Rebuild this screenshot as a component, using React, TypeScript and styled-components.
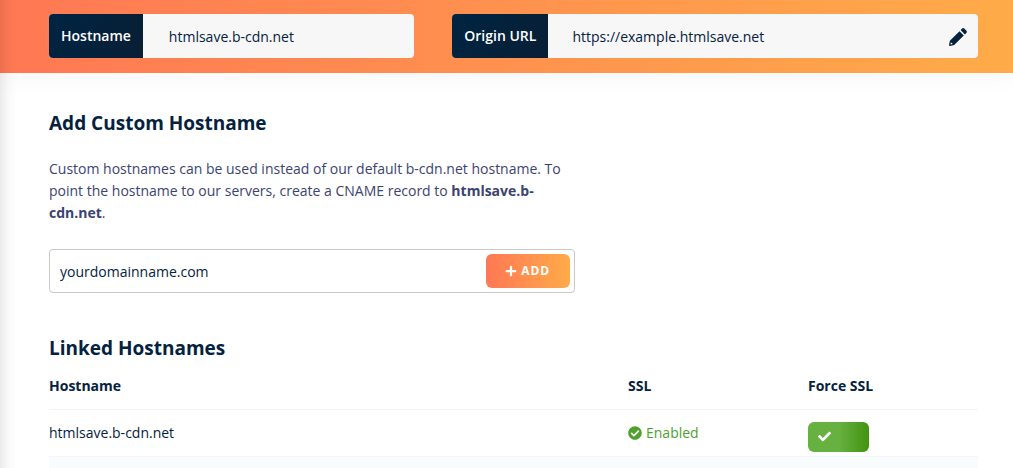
import React from 'react';
import styled, { createGlobalStyle } from 'styled-components';
import { FaCheck, FaCheckCircle, FaPlus } from 'react-icons/fa';

const navy = '#04223f';
const brand = 'linear-gradient(90deg, #ff7854 0%, #ffab49 100%)';
const fontStack = '"Open Sans", "Liberation Sans", sans-serif';

const GlobalStyle = createGlobalStyle`
  *, *::before, *::after { box-sizing: border-box; }
  body {
    margin: 0;
    background: #fff;
    color: ${navy};
    font: 400 14px/22px ${fontStack};
  }
`;

const Page = styled.div`
  position: relative;
  min-height: 100vh;
  overflow: hidden;

  &::after {
    content: '';
    position: absolute;
    inset: 0 auto 0 0;
    width: 18px;
    background: linear-gradient(90deg, rgba(0, 0, 0, 0.08), rgba(0, 0, 0, 0.02) 50%, transparent);
    pointer-events: none;
  }
`;

const Banner = styled.header`
  display: grid;
  grid-template-columns: 41fr 59fr;
  gap: 38px;
  padding: 14px 35px 15px 49px;
  background: ${brand};
  box-shadow: 0 0 30px rgba(0, 0, 0, 0.05);
`;

const Field = styled.div`
  display: flex;
  height: 44px;
  border-radius: 4px;
  overflow: hidden;
  background: #f7f7f7;
`;

const FieldLabel = styled.label`
  flex: none;
  padding: 0 12px;
  background: linear-gradient(120deg, #002442, #081f35);
  color: #fff;
  font-weight: 600;
  line-height: 44px;
`;

const FieldInput = styled.input<{ $inset: number }>`
  flex: 1;
  min-width: 0;
  padding: 2px 0 0 ${(p) => p.$inset}px;
  border: 0;
  outline: 0;
  background: transparent;
  color: ${navy};
  font: inherit;
`;

const EditButton = styled.button`
  display: flex;
  align-items: center;
  padding: 2px 11px 0;
  border: 0;
  background: transparent;
  color: ${navy};
  cursor: pointer;
`;

const Content = styled.main`
  padding: 36px 35px 0 49px;
`;

const Heading = styled.h2`
  margin: 0;
  font-size: 19px;
  font-weight: 700;
  line-height: 28px;
`;

const HostnameForm = styled.form`
  width: calc((100% - 38px) * 0.59);
  min-width: 300px;
  margin-bottom: 41px;
`;

const Hint = styled.p`
  margin: 21px 0 25px;
  color: #3b4371;

  strong { font-weight: 700; }
`;

const AddBox = styled.div`
  display: flex;
  width: 100%;
  height: 44px;
  padding: 4px;
  border: 1px solid #c9c9c9;
  border-radius: 4px;
`;

const AddInput = styled.input`
  flex: 1;
  min-width: 0;
  padding: 2px 6px 0;
  border: 0;
  outline: 0;
  background: transparent;
  color: ${navy};
  font: inherit;

  &::placeholder { color: ${navy}; opacity: 1; }
`;

const AddButton = styled.button`
  display: flex;
  align-items: center;
  justify-content: center;
  gap: 4px;
  width: 84px;
  border: 0;
  border-radius: 6px;
  background: ${brand};
  color: #fff;
  font: 700 12px/34px ${fontStack};
  letter-spacing: 1px;
  cursor: pointer;

  svg { font-size: 12px; }
`;

const Table = styled.table`
  width: 100%;
  table-layout: fixed;
  border-collapse: collapse;
  text-align: left;
`;

const HeadCell = styled.th<{ $width?: number }>`
  width: ${(p) => (p.$width ? `${p.$width}px` : 'auto')};
  height: 47px;
  padding: 2px 0 0;
  border-bottom: 1px solid #f3f5f6;
  font-weight: 700;
`;

const Row = styled.tr`
  &:nth-child(even) { background: #f8fcfd; }
`;

const Cell = styled.td`
  height: 47px;
  padding: 0;
  border-bottom: 1px solid #f3f5f6;
`;

const StripeCell = styled.td`
  height: 12px;
  padding: 0;
`;

const Status = styled.span`
  display: flex;
  align-items: center;
  gap: 4px;
  color: #4fa02d;

  svg { font-size: 14px; }
`;

const Toggle = styled.label`
  display: grid;
  width: 61px;
  height: 30px;
  margin-top: 9px;
  align-items: center;
  color: #fff;
  cursor: pointer;

  > * { grid-area: 1 / 1; }
  svg { margin: 0 0 2px 10px; font-size: 13px; pointer-events: none; }
`;

const ToggleInput = styled.input`
  appearance: none;
  width: 100%;
  height: 100%;
  margin: 0;
  border-radius: 6px;
  background: #c4c9cc;
  cursor: pointer;

  &:checked { background: linear-gradient(90deg, #67b141 0%, #67b141 50%, #41930f 100%); }
`;

const PencilIcon = () => (
  <svg width="18" height="18" viewBox="0 0 18 18" fill="currentColor" aria-hidden="true">
    <path
      fillRule="evenodd"
      d="M10.5 3.2 14.8 7.5 5.2 17.1 1 18Q0 18 0 17L.9 12.8ZM1.9 14.2 1.5 16.5 3.8 16.1Z"
    />
    <path d="M11.6 2.1 13.1.6Q14.2-.4 15.3.6L17.4 2.7Q18.4 3.8 17.4 4.9L15.9 6.4Z" />
  </svg>
);

export default function App() {
  return (
    <Page>
      <GlobalStyle />
      <Banner>
        <Field>
          <FieldLabel htmlFor="hostname">Hostname</FieldLabel>
          <FieldInput id="hostname" $inset={26} readOnly value="htmlsave.b-cdn.net" />
        </Field>
        <Field>
          <FieldLabel htmlFor="origin">Origin URL</FieldLabel>
          <FieldInput id="origin" $inset={24} defaultValue="https://example.htmlsave.net" />
          <EditButton type="button" aria-label="Edit origin URL">
            <PencilIcon />
          </EditButton>
        </Field>
      </Banner>

      <Content>
        <HostnameForm onSubmit={(e) => e.preventDefault()}>
          <Heading>Add Custom Hostname</Heading>
          <Hint>
            Custom hostnames can be used instead of our default b-cdn.net hostname. To point the
            hostname to our servers, create a CNAME record to <strong>htmlsave.b-cdn.net</strong>.
          </Hint>
          <AddBox>
            <AddInput aria-label="Custom hostname" placeholder="yourdomainname.com" />
            <AddButton type="submit">
              <FaPlus />
              ADD
            </AddButton>
          </AddBox>
        </HostnameForm>

        <Heading>Linked Hostnames</Heading>
        <Table>
          <thead>
            <tr>
              <HeadCell scope="col">Hostname</HeadCell>
              <HeadCell scope="col" $width={180}>SSL</HeadCell>
              <HeadCell scope="col" $width={170}>Force SSL</HeadCell>
            </tr>
          </thead>
          <tbody>
            <Row>
              <Cell>htmlsave.b-cdn.net</Cell>
              <Cell>
                <Status>
                  <FaCheckCircle />
                  Enabled
                </Status>
              </Cell>
              <Cell>
                <Toggle>
                  <ToggleInput type="checkbox" role="switch" aria-label="Force SSL" defaultChecked />
                  <FaCheck />
                </Toggle>
              </Cell>
            </Row>
            <Row>
              <StripeCell colSpan={3} />
            </Row>
          </tbody>
        </Table>
      </Content>
    </Page>
  );
}
